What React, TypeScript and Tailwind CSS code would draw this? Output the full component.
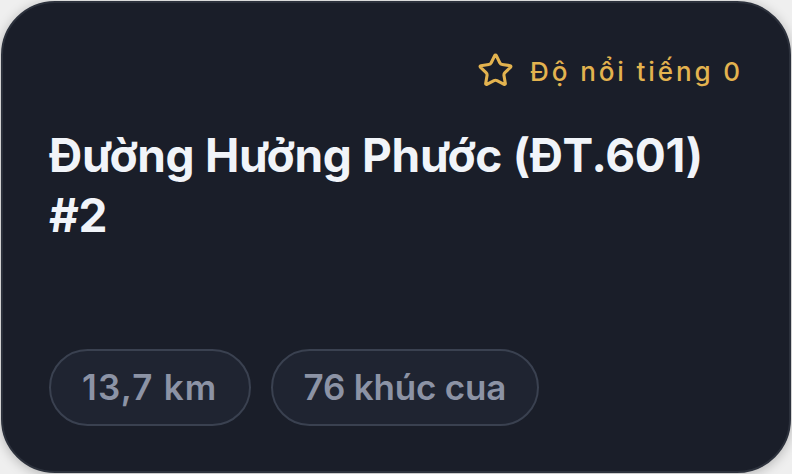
import { Star } from "lucide-react";

export default function App() {
  return (
    <div className="w-[792px] h-[474px] bg-[#efefef] p-px" style={{ fontFamily: "Inter, 'Noto Sans', sans-serif" }}>
      <div className="h-full w-full flex flex-col rounded-[54px] border-2 border-[#2c313c] bg-[#1a1e29] px-[46px] pt-[44px] pb-[45px] shadow-[0_2px_12px_rgba(0,0,0,0.25)]">
        <div className="flex h-12 items-center justify-end gap-4 text-[#e3b34f]">
          <Star size={37} strokeWidth={2} className="-mt-0.5" />
          <span className="text-[26px] font-medium tracking-[2.9px]">Độ nổi tiếng 0</span>
        </div>
        <h1 className="mt-[30px] text-[46px] font-bold leading-[60px] tracking-[-0.3px] text-[#f1f4f9]">
          Đường Hưởng Phước (ĐT.601)
          <br />
          #2
        </h1>
        <div className="mt-auto flex gap-5">
          <span className="flex h-[77px] items-center rounded-full border-2 border-[#3a4150] bg-[#1f2431] px-[31px] text-[35px] font-semibold tracking-[1.2px] text-[#8c93a5]">
            13,7 km
          </span>
          <span className="flex h-[77px] items-center rounded-full border-2 border-[#3a4150] bg-[#1f2431] px-[31px] text-[35px] font-semibold tracking-[-0.2px] text-[#8c93a5]">
            76 khúc cua
          </span>
        </div>
      </div>
    </div>
  );
}
